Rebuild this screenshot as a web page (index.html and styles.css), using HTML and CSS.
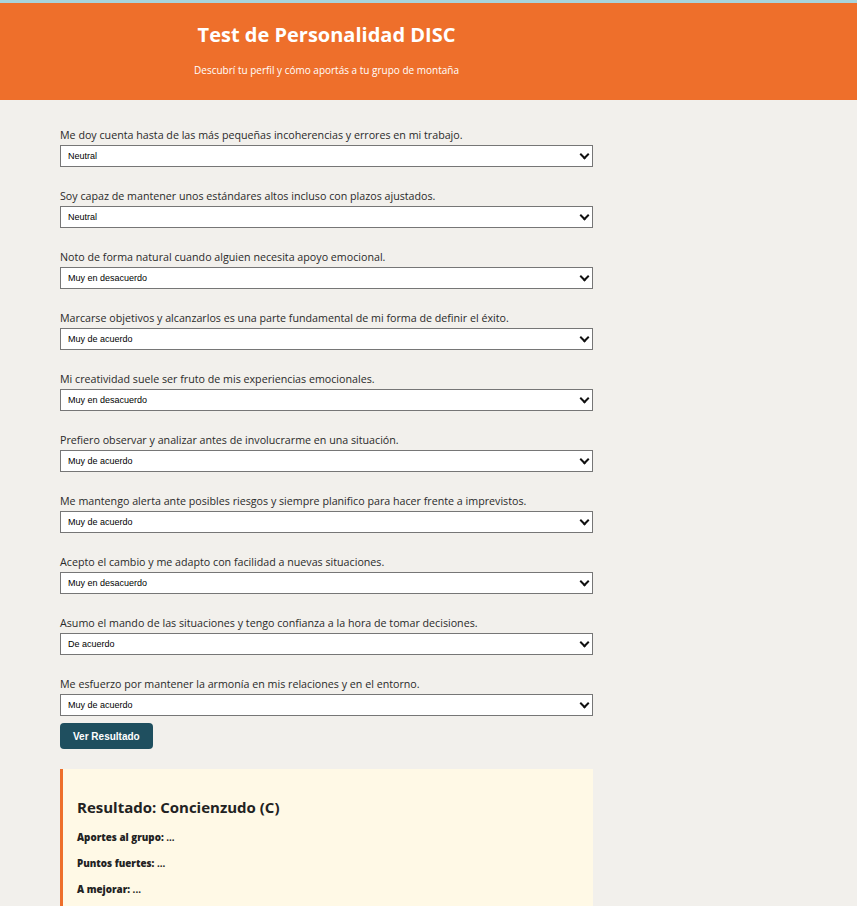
FILE: index.html
```html
<!DOCTYPE html>
<html lang="es">
<head>
<meta charset="utf-8">
<title>Test de Personalidad DISC</title>
<link rel="stylesheet" href="styles.css">
</head>
<body>
<header class="hero">
  <div class="hero-inner">
    <h1 class="hero-title">Test de Personalidad DISC</h1>
    <p class="hero-sub">Descubrí tu perfil y cómo aportás a tu grupo de montaña</p>
  </div>
</header>
<main class="main">
  <form class="quiz">
    <div class="q">
      <label class="q-label">Me doy cuenta hasta de las más pequeñas incoherencias y errores en mi trabajo.</label>
      <div class="sel-wrap"><select class="sel"><option>Neutral</option></select></div>
    </div>
    <div class="q">
      <label class="q-label">Soy capaz de mantener unos estándares altos incluso con plazos ajustados.</label>
      <div class="sel-wrap"><select class="sel"><option>Neutral</option></select></div>
    </div>
    <div class="q">
      <label class="q-label">Noto de forma natural cuando alguien necesita apoyo emocional.</label>
      <div class="sel-wrap"><select class="sel"><option>Muy en desacuerdo</option></select></div>
    </div>
    <div class="q">
      <label class="q-label">Marcarse objetivos y alcanzarlos es una parte fundamental de mi forma de definir el éxito.</label>
      <div class="sel-wrap"><select class="sel"><option>Muy de acuerdo</option></select></div>
    </div>
    <div class="q">
      <label class="q-label">Mi creatividad suele ser fruto de mis experiencias emocionales.</label>
      <div class="sel-wrap"><select class="sel"><option>Muy en desacuerdo</option></select></div>
    </div>
    <div class="q">
      <label class="q-label">Prefiero observar y analizar antes de involucrarme en una situación.</label>
      <div class="sel-wrap"><select class="sel"><option>Muy de acuerdo</option></select></div>
    </div>
    <div class="q">
      <label class="q-label">Me mantengo alerta ante posibles riesgos y siempre planifico para hacer frente a imprevistos.</label>
      <div class="sel-wrap"><select class="sel"><option>Muy de acuerdo</option></select></div>
    </div>
    <div class="q">
      <label class="q-label">Acepto el cambio y me adapto con facilidad a nuevas situaciones.</label>
      <div class="sel-wrap"><select class="sel"><option>Muy en desacuerdo</option></select></div>
    </div>
    <div class="q">
      <label class="q-label">Asumo el mando de las situaciones y tengo confianza a la hora de tomar decisiones.</label>
      <div class="sel-wrap"><select class="sel"><option>De acuerdo</option></select></div>
    </div>
    <div class="q">
      <label class="q-label">Me esfuerzo por mantener la armonía en mis relaciones y en el entorno.</label>
      <div class="sel-wrap"><select class="sel"><option>Muy de acuerdo</option></select></div>
    </div>
    <button type="button" class="btn">Ver Resultado</button>
  </form>
  <section class="result">
    <h2 class="result-title">Resultado: Concienzudo (C)</h2>
    <p class="result-line"><strong>Aportes al grupo:</strong> ...</p>
    <p class="result-line"><strong>Puntos fuertes:</strong> ...</p>
    <p class="result-line"><strong>A mejorar:</strong> ...</p>
  </section>
</main>
</body>
</html>
```
FILE: styles.css
```css
* { box-sizing: border-box; }
html, body { margin: 0; padding: 0; }
body {
  background: #f2f0ec;
  font-family: "Open Sans", "Noto Sans", sans-serif;
  color: #222;
  border-top: 3px solid #a8d4dc;
}
.hero {
  background: #ee6f2b;
  color: #fff;
  height: 97px;
}
.hero-inner {
  width: 533px;
  margin-left: 60px;
  text-align: center;
  padding-top: 20px;
}
.hero-title {
  margin: 0;
  font-size: 20px;
  line-height: 24px;
  font-weight: 700;
}
.hero-sub {
  margin: 16px 0 0;
  font-size: 10px;
  line-height: 14px;
}
.main {
  width: 533px;
  margin-left: 60px;
  padding-top: 27px;
}
.quiz { display: flex; flex-direction: column; }
.q + .q { margin-top: 21px; }
.q-label {
  display: block;
  font-size: 10.7px;
  line-height: 16px;
  margin-bottom: 2px;
  color: #2a2a2a;
}
.sel-wrap { position: relative; }
.sel-wrap::after {
  content: "";
  position: absolute;
  right: 5px;
  top: 6px;
  width: 5px;
  height: 5px;
  border-right: 2.5px solid #111;
  border-bottom: 2.5px solid #111;
  transform: rotate(45deg);
  pointer-events: none;
}
.sel {
  display: block;
  width: 100%;
  height: 22px;
  appearance: none;
  -webkit-appearance: none;
  background: #fff;
  border: 1px solid #767676;
  border-radius: 0;
  font-family: "Liberation Sans", Arial, sans-serif;
  font-size: 9px;
  color: #000;
  padding: 0 7px;
}
.btn {
  align-self: flex-start;
  margin-top: 7px;
  height: 26px;
  padding: 0 13px;
  background: #1f4f5f;
  color: #fff;
  border: none;
  border-radius: 4px;
  font-family: "Liberation Sans", Arial, sans-serif;
  font-weight: 700;
  font-size: 10px;
}
.result {
  margin-top: 20px;
  background: #fff9e6;
  border-left: 3px solid #ee6f2b;
  padding: 27px 14px 20px;
}
.result-title {
  margin: 0 0 13px;
  font-size: 15px;
  line-height: 22px;
  font-weight: 700;
  color: #222;
}
.result-line {
  margin: 0 0 12px;
  font-size: 9.8px;
  line-height: 14px;
  font-weight: 700;
}
```
